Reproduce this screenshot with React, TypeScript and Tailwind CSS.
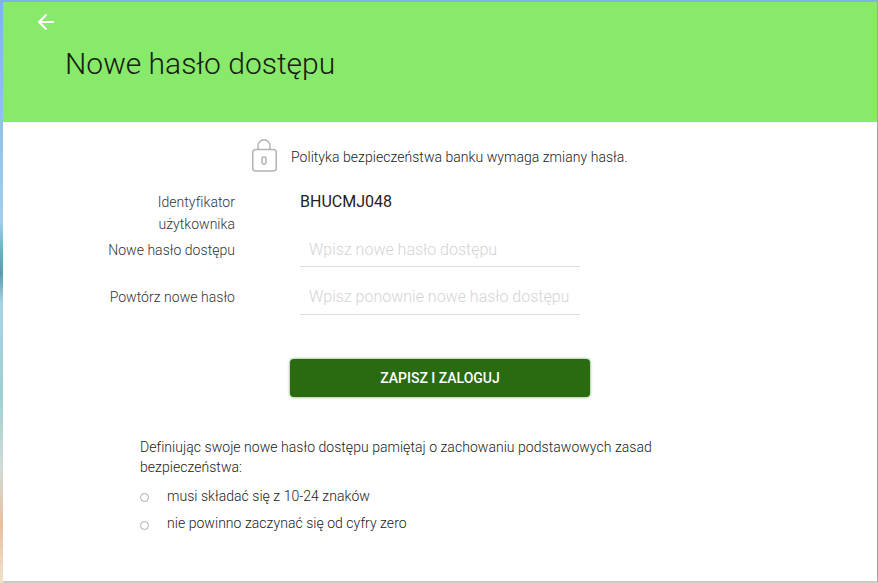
import React from 'react';
import { ArrowLeft } from 'lucide-react';

const App: React.FC = () => {
  return (
    <div className="w-[878px] h-[583px] pt-[2px] pl-[3px] overflow-hidden bg-[linear-gradient(180deg,#7db4e6_0%,#a3cdea_38%,#5fb9bd_43%,#5a9cae_47%,#a9d3e6_52%,#9fcfd0_68%,#cfdcd8_80%,#e8bfa0_90%,#f0e2cc_100%)] font-['Roboto',sans-serif]">
      <div className="h-full bg-white flex flex-col border-r border-b-2 border-r-[#9aa5a8] border-b-[#cfcac2]">
        {/* Header */}
        <div className="h-[120px] bg-[#88e96b] shrink-0 pl-[31px] pt-[8px]">
          <ArrowLeft size={24} strokeWidth={2} className="text-white" />
          <h1 className="ml-[31px] mt-[8px] text-[30px] leading-[44px] font-light text-[#15200f]">Nowe hasło dostępu</h1>
        </div>

        {/* Info */}
        <div className="flex items-center pl-[249px] mt-[17px] h-[33px] gap-[14px]">
          <svg width="25" height="33" viewBox="0 0 25 33" fill="none" stroke="#b4b4b4" strokeWidth="1.5">
            <rect x="0.75" y="10.5" width="23.5" height="21.5" rx="3" />
            <path d="M6 10.5V6.75a6 6 0 0 1 12 0V10.5" />
            <rect x="10" y="18" width="4" height="7" rx="1.5" />
          </svg>
          <span className="mt-[4px] text-[14px] font-light text-[#222222] tracking-[0.04px]">Polityka bezpieczeństwa banku wymaga zmiany hasła.</span>
        </div>

        {/* Form */}
        <div className="mt-[19px] grid grid-cols-[232px_280px] gap-x-[65px] text-[14px] font-light text-[#333333] tracking-[0.04px]">
          <div className="text-right leading-[22px] pl-[140px]">Identyfikator użytkownika</div>
          <div className="text-[16px] font-normal text-[#222222] leading-[22px] tracking-normal">BHUCMJ048</div>

          <div className="text-right leading-[22px] mt-[4px]">Nowe hasło dostępu</div>
          <div className="h-[28px] border-b border-[#dddddd] pl-[9px] text-[16px] text-[#d4d4d4] leading-[22px] mt-[4px] tracking-normal">Wpisz nowe hasło dostępu</div>

          <div className="text-right leading-[22px] mt-[19px]">Powtórz nowe hasło</div>
          <div className="h-[29px] border-b border-[#dddddd] pl-[9px] text-[16px] text-[#d4d4d4] leading-[22px] mt-[19px] tracking-normal">Wpisz ponownie nowe hasło dostępu</div>
        </div>

        {/* Button */}
        <div className="mt-[44px] ml-[287px]">
          <button className="w-[300px] h-[38px] rounded-[4px] bg-[#2a6a10] text-white text-[14px] font-medium shadow-[0_0_3px_rgba(42,106,16,0.7)]">ZAPISZ I ZALOGUJ</button>
        </div>

        {/* Rules */}
        <div className="mt-[40px] ml-[137px] w-[540px] text-[14px] font-light text-[#222222] leading-[20px] tracking-[0.04px]">
          <p>Definiując swoje nowe hasło dostępu pamiętaj o zachowaniu podstawowych zasad bezpieczeństwa:</p>
          <ul className="mt-[9px] flex flex-col gap-[7px]">
            <li className="flex items-center gap-[18px]">
              <span className="w-[9px] h-[9px] rounded-full border border-[#aaaaaa] mt-[3px]" />
              musi składać się z 10-24 znaków
            </li>
            <li className="flex items-center gap-[18px]">
              <span className="w-[9px] h-[9px] rounded-full border border-[#aaaaaa] mt-[5px]" />
              nie powinno zaczynać się od cyfry zero
            </li>
          </ul>
        </div>
      </div>
    </div>
  );
};

export default App;
